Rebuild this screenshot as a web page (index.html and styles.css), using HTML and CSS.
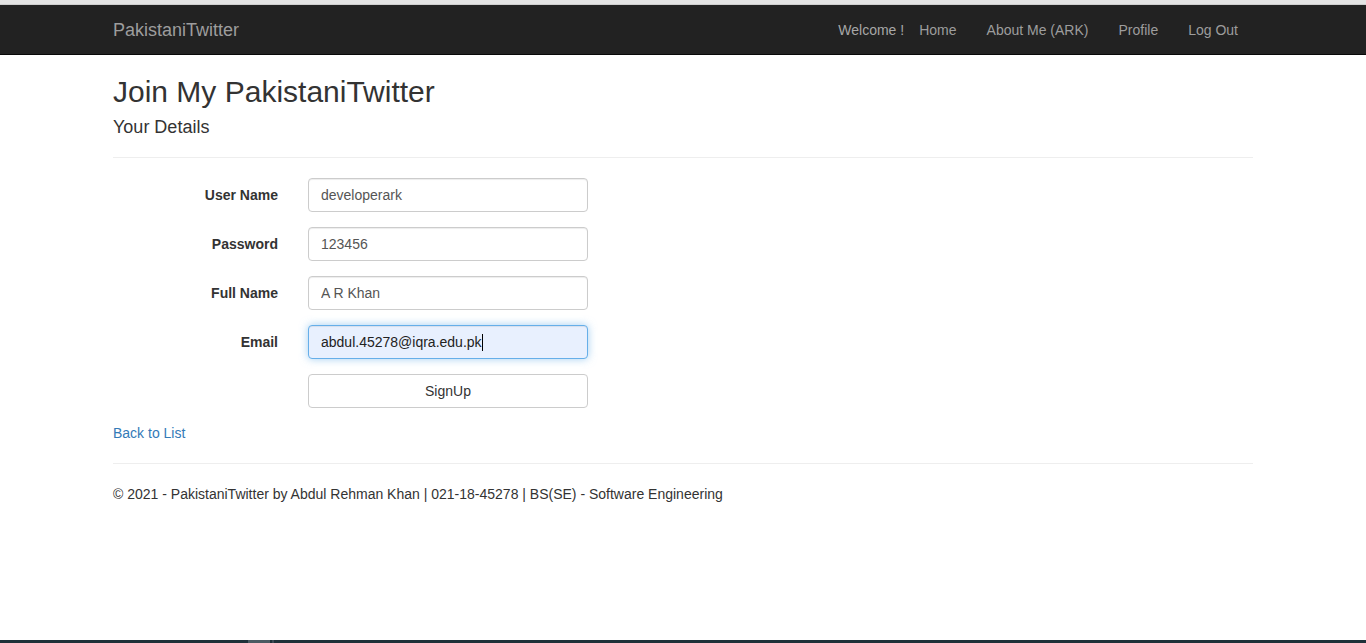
FILE: index.html
```html
<!DOCTYPE html>
<html>
<head>
<meta charset="utf-8">
<title>Join My PakistaniTwitter</title>
<link rel="stylesheet" href="styles.css">
</head>
<body>
<div class="screen">
  <div class="top-strip"></div>
  <nav class="navbar">
    <div class="container nav-inner">
      <a class="brand" href="#">PakistaniTwitter</a>
      <div class="nav-right">
        <span class="nav-text">Welcome !</span>
        <a class="nav-link" href="#">Home</a>
        <a class="nav-link" href="#">About Me (ARK)</a>
        <a class="nav-link" href="#">Profile</a>
        <a class="nav-link" href="#">Log Out</a>
      </div>
    </div>
  </nav>
  <main class="container body-content">
    <h2 class="title">Join My PakistaniTwitter</h2>
    <h4 class="subtitle">Your Details</h4>
    <hr class="rule head-rule">
    <form class="form-horizontal">
      <div class="form-group">
        <label class="control-label">User Name</label>
        <div class="field"><input class="form-control" type="text" value="developerark"></div>
      </div>
      <div class="form-group">
        <label class="control-label">Password</label>
        <div class="field"><input class="form-control" type="text" value="123456"></div>
      </div>
      <div class="form-group">
        <label class="control-label">Full Name</label>
        <div class="field"><input class="form-control" type="text" value="A R Khan"></div>
      </div>
      <div class="form-group">
        <label class="control-label">Email</label>
        <div class="field"><div class="form-control focused">abdul.45278@iqra.edu.pk<span class="caret"></span></div></div>
      </div>
      <div class="form-group">
        <span class="control-label"></span>
        <div class="field"><button class="btn" type="button">SignUp</button></div>
      </div>
    </form>
    <div class="back"><a href="#">Back to List</a></div>
    <hr class="rule">
    <footer class="footer">
      <p>© 2021 - PakistaniTwitter by Abdul Rehman Khan | 021-18-45278 | BS(SE) - Software Engineering</p>
    </footer>
  </main>
  <div class="taskbar"><span class="tb-gap"></span><span class="tb-item"></span><span class="tb-small"></span></div>
</div>
</body>
</html>
```

FILE: styles.css
```css
* { box-sizing: border-box; }
html, body { margin: 0; padding: 0; }
body {
  font-family: "Liberation Sans", Arial, sans-serif;
  font-size: 14px;
  line-height: 20px;
  color: #333;
  background: #fff;
}
.screen {
  height: 643px;
  display: flex;
  flex-direction: column;
  overflow: hidden;
}
.top-strip {
  height: 5px;
  background: #e4e4e4;
  border-bottom: 1px solid #cfcfcf;
  flex: none;
}
.container {
  width: 1170px;
  margin: 0 auto;
  padding: 0 15px;
}
.navbar {
  height: 50px;
  background: #222;
  border-bottom: 1px solid #080808;
  flex: none;
}
.nav-inner {
  display: flex;
  align-items: center;
  justify-content: space-between;
  height: 50px;
}
.brand {
  color: #9d9d9d;
  font-size: 18px;
  line-height: 20px;
  text-decoration: none;
}
.nav-right {
  display: flex;
  align-items: center;
}
.nav-text { color: #a7a7a7; }
.nav-link {
  color: #9d9d9d;
  text-decoration: none;
  padding: 15px;
  line-height: 20px;
}
.body-content { flex: 1; }
.title {
  font-size: 30px;
  font-weight: 500;
  line-height: 33px;
  margin: 20px 0 10px;
  color: #333;
}
.subtitle {
  font-size: 18px;
  font-weight: 500;
  line-height: 19.8px;
  margin: 10px 0 10px;
  color: #333;
}
.rule {
  border: 0;
  border-top: 1px solid #eee;
  margin: 20px 0;
  height: 0;
}
.head-rule { margin-top: 19px; }
.form-horizontal { margin: 0 -15px; }
.form-group {
  display: flex;
  margin-bottom: 15px;
}
.control-label {
  width: 195px;
  padding: 7px 15px 0;
  text-align: right;
  font-weight: bold;
  flex: none;
}
.field { padding: 0 15px; }
.form-control {
  display: block;
  width: 280px;
  height: 34px;
  padding: 6px 12px;
  font-family: "Liberation Sans", Arial, sans-serif;
  font-size: 14px;
  line-height: 20px;
  color: #555;
  background: #fff;
  border: 1px solid #ccc;
  border-radius: 4px;
  box-shadow: inset 0 1px 1px rgba(0,0,0,.075);
  outline: none;
}
.focused {
  background: #e8f0fe;
  color: #222;
  border-color: #66afe9;
  box-shadow: inset 0 1px 1px rgba(0,0,0,.075), 0 0 8px rgba(102,175,233,.6);
  white-space: nowrap;
}
.caret {
  display: inline-block;
  width: 1px;
  height: 17px;
  background: #000;
  vertical-align: -4px;
}
.btn {
  display: block;
  width: 280px;
  height: 34px;
  padding: 6px 12px;
  font-family: "Liberation Sans", Arial, sans-serif;
  font-size: 14px;
  line-height: 20px;
  color: #333;
  background: #fff;
  border: 1px solid #ccc;
  border-radius: 4px;
}
.back a {
  color: #337ab7;
  text-decoration: none;
}
.footer p { margin: 0; }
.taskbar {
  height: 3px;
  flex: none;
  background: #1e3139;
  display: flex;
}
.tb-gap { width: 248px; }
.tb-item { width: 22px; background: #4b5b63; }
.tb-small { width: 2px; margin-left: 2px; background: #3c4a55; }
```
